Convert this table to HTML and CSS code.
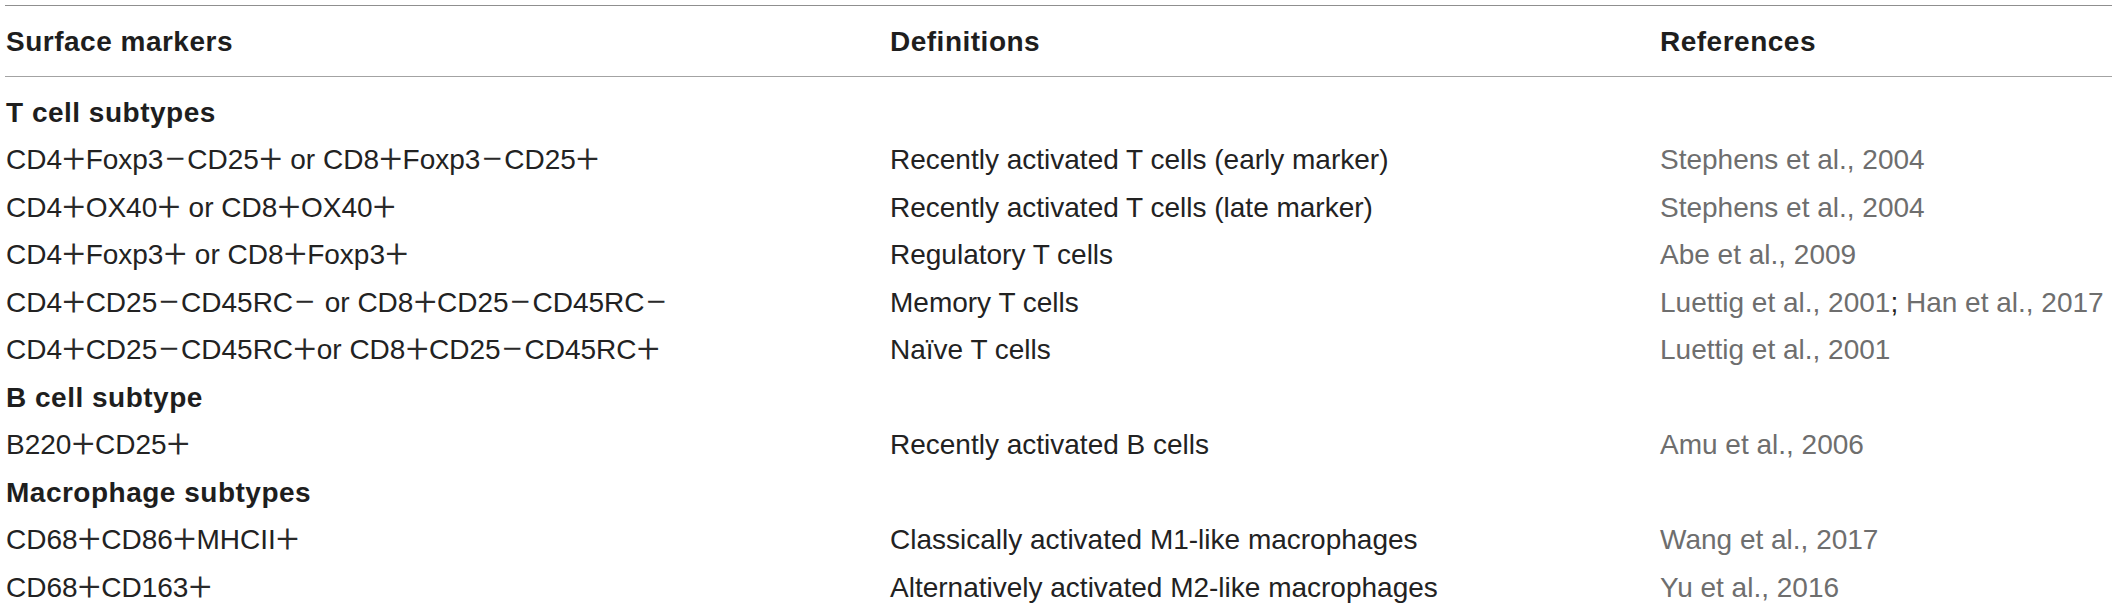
FILE: index.html
```html
<!DOCTYPE html>
<html lang="en">
<head>
<meta charset="utf-8">
<title>Surface markers</title>
<link rel="stylesheet" href="styles.css">
</head>
<body>
<table class="markers">
  <colgroup>
    <col class="c-marker">
    <col class="c-def">
    <col class="c-ref">
  </colgroup>
  <thead>
    <tr>
      <th>Surface markers</th>
      <th>Definitions</th>
      <th>References</th>
    </tr>
  </thead>
  <tbody>
    <tr class="group first">
      <td colspan="3">T cell subtypes</td>
    </tr>
    <tr>
      <td>CD4<span class="op">+</span>Foxp3<span class="op">−</span>CD25<span class="op">+</span> or CD8<span class="op">+</span>Foxp3<span class="op">−</span>CD25<span class="op">+</span></td>
      <td>Recently activated T cells (early marker)</td>
      <td class="ref">Stephens et al., 2004</td>
    </tr>
    <tr>
      <td>CD4<span class="op">+</span>OX40<span class="op">+</span> or CD8<span class="op">+</span>OX40<span class="op">+</span></td>
      <td>Recently activated T cells (late marker)</td>
      <td class="ref">Stephens et al., 2004</td>
    </tr>
    <tr>
      <td>CD4<span class="op">+</span>Foxp3<span class="op">+</span> or CD8<span class="op">+</span>Foxp3<span class="op">+</span></td>
      <td>Regulatory T cells</td>
      <td class="ref">Abe et al., 2009</td>
    </tr>
    <tr>
      <td>CD4<span class="op">+</span>CD25<span class="op">−</span>CD45RC<span class="op">−</span> or CD8<span class="op">+</span>CD25<span class="op">−</span>CD45RC<span class="op">−</span></td>
      <td>Memory T cells</td>
      <td class="ref">Luettig et al., 2001<span class="sep">;</span> Han et al., 2017</td>
    </tr>
    <tr>
      <td>CD4<span class="op">+</span>CD25<span class="op">−</span>CD45RC<span class="op">+</span>or CD8<span class="op">+</span>CD25<span class="op">−</span>CD45RC<span class="op">+</span></td>
      <td>Naïve T cells</td>
      <td class="ref">Luettig et al., 2001</td>
    </tr>
    <tr class="group">
      <td colspan="3">B cell subtype</td>
    </tr>
    <tr>
      <td>B220<span class="op">+</span>CD25<span class="op">+</span></td>
      <td>Recently activated B cells</td>
      <td class="ref">Amu et al., 2006</td>
    </tr>
    <tr class="group">
      <td colspan="3">Macrophage subtypes</td>
    </tr>
    <tr>
      <td>CD68<span class="op">+</span>CD86<span class="op">+</span>MHCII<span class="op">+</span></td>
      <td>Classically activated M1-like macrophages</td>
      <td class="ref">Wang et al., 2017</td>
    </tr>
    <tr>
      <td>CD68<span class="op">+</span>CD163<span class="op">+</span></td>
      <td>Alternatively activated M2-like macrophages</td>
      <td class="ref">Yu et al., 2016</td>
    </tr>
  </tbody>
</table>
</body>
</html>
```
FILE: styles.css
```css
html, body {
  background: #ffffff;
}

body {
  margin: 5px;
  font-family: "Liberation Sans", Arial, Helvetica, sans-serif;
  font-size: 28px;
  color: #222222;
}

.markers {
  width: 2107px;
  border-collapse: collapse;
  table-layout: fixed;
}

.c-marker { width: 884px; }
.c-def { width: 770px; }

.markers th,
.markers td {
  padding: 0 0 0 1px;
  line-height: 47.5px;
  text-align: left;
  vertical-align: top;
  white-space: nowrap;
}

.markers thead tr {
  border-top: 1px solid #8f8f8f;
  border-bottom: 1px solid #a3a3a3;
}

.markers th {
  font-weight: bold;
  color: #1e1e1e;
  letter-spacing: 0.5px;
  padding-top: 12px;
  padding-bottom: 10px;
}

.markers .first td {
  padding-top: 12px;
}

.group td {
  font-weight: bold;
  color: #1e1e1e;
  letter-spacing: 0.5px;
}

.op {
  font-family: Roboto, "Liberation Sans", sans-serif;
  font-weight: 300;
  font-size: 40px;
  line-height: 0;
  vertical-align: -4px;
  padding: 0 0.5px;
  color: #2a2a2a;
}

.ref {
  color: #6e6e6e;
}

.sep {
  color: #222222;
}
```
